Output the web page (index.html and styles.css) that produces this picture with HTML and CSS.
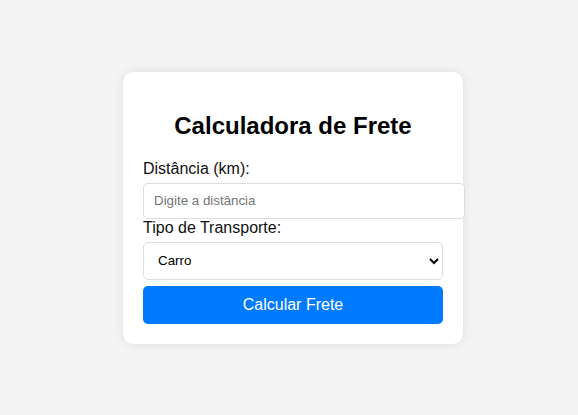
FILE: index.html
```html
<!DOCTYPE html>
<html lang="pt">
<head>
<meta charset="utf-8">
<title>Calculadora de Frete</title>
<link rel="stylesheet" href="styles.css">
</head>
<body>
<div class="card">
  <h2 class="title">Calculadora de Frete</h2>
  <label class="label" for="dist">Distância (km):</label>
  <input class="input" id="dist" type="number" placeholder="Digite a distância">
  <label class="label" for="tipo">Tipo de Transporte:</label>
  <select class="select" id="tipo">
    <option>Carro</option>
    <option>Moto</option>
    <option>Caminhão</option>
  </select>
  <button class="button" type="button">Calcular Frete</button>
</div>
</body>
</html>
```

FILE: styles.css
```css
html, body {
  margin: 0;
  height: 100%;
}
body {
  background: #f4f4f4;
  font-family: "Liberation Sans", Arial, sans-serif;
  display: flex;
  justify-content: center;
  align-items: center;
  padding-left: 8px;
  box-sizing: border-box;
}
.card {
  background: #fff;
  width: 300px;
  padding: 20px;
  border-radius: 10px;
  box-shadow: 0 0 10px rgba(0, 0, 0, 0.1);
}
.title {
  font-size: 24px;
  font-weight: bold;
  text-align: center;
  margin: 20px 0 20px;
  color: #000;
}
.label {
  display: block;
  font-size: 16px;
  color: #111;
  margin-bottom: 5px;
}
.input {
  display: block;
  width: 300px;
  padding: 10px;
  border: 1px solid #ddd;
  border-radius: 5px;
  font-family: "Liberation Sans", Arial, sans-serif;
  font-size: 13.33px;
  height: 36px;
  box-sizing: border-box;
  width: 322px;
  margin: 0;
}
.input::placeholder {
  color: #757575;
}
.select {
  display: block;
  width: 300px;
  height: 38px;
  padding: 0 10px;
  border: 1px solid #ddd;
  border-radius: 5px;
  font-family: "Liberation Sans", Arial, sans-serif;
  font-size: 13.33px;
  background: #fff;
  color: #000;
  margin: 0 0 6px;
  box-sizing: border-box;
}
.button {
  display: block;
  width: 300px;
  height: 38px;
  border: none;
  border-radius: 5px;
  background: #007bff;
  color: #fff;
  font-family: "Liberation Sans", Arial, sans-serif;
  font-size: 16px;
  padding: 0;
}
```
